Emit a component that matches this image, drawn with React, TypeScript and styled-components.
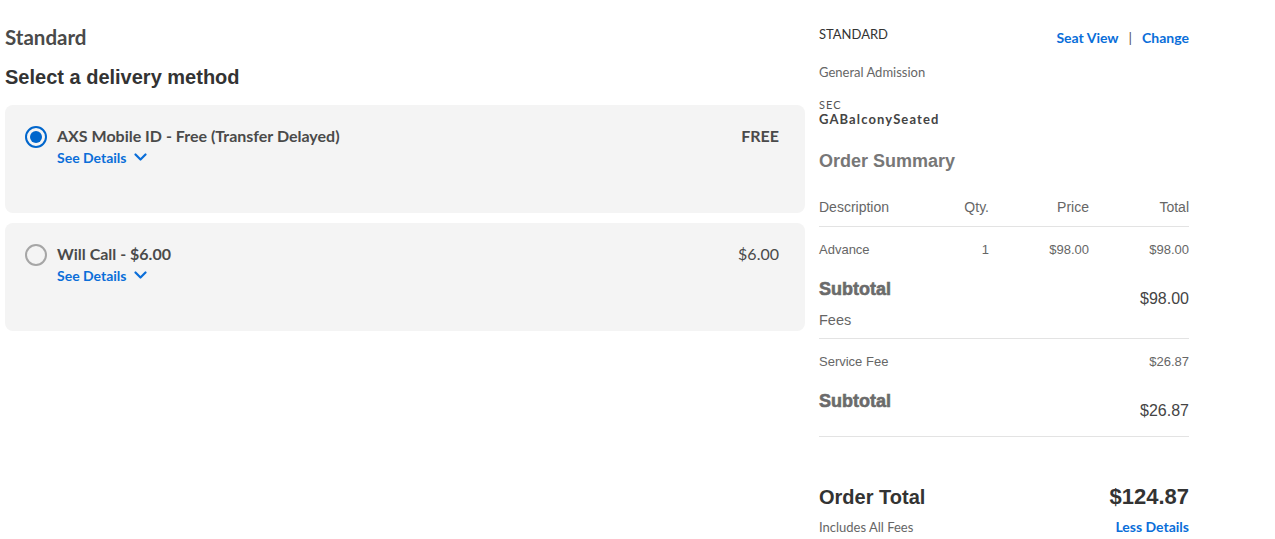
import React from "react";
import styled, { createGlobalStyle } from "styled-components";

const Global = createGlobalStyle`
  html, body { margin: 0; padding: 0; background: #fff; }
  body { font-family: Lato, "Liberation Sans", sans-serif; }
  * { box-sizing: border-box; }
`;

const Page = styled.div`
  display: flex;
  align-items: flex-start;
  gap: 14px;
  padding: 0 0 0 5px;
  width: 1275px;
  height: 539px;
  overflow: hidden;
`;

const Left = styled.div`
  width: 800px;
  display: flex;
  flex-direction: column;
  padding-top: 25px;
`;

const TicketType = styled.div`
  font-family: Lato, sans-serif;
  font-weight: 700;
  font-size: 20.5px;
  line-height: 24px;
  color: #4a4a4a;
`;

const SectionTitle = styled.h2`
  margin: 16px 0 16px;
  font-family: "Liberation Sans", Arial, sans-serif;
  font-weight: 700;
  font-size: 20px;
  line-height: 24px;
  color: #333;
`;

const Options = styled.div`
  display: flex;
  flex-direction: column;
  gap: 10px;
`;

const Card = styled.div`
  display: flex;
  align-items: flex-start;
  height: 108px;
  background: #f4f4f4;
  border-radius: 8px;
  padding: 21px 26px 0 20px;
`;

const Radio = styled.span<{ $checked?: boolean }>`
  flex: none;
  width: 22px;
  height: 22px;
  border-radius: 50%;
  border: 2px solid ${(p) => (p.$checked ? "#0066cc" : "#a6a6a6")};
  display: flex;
  align-items: center;
  justify-content: center;
  margin-right: 10px;
  &::after {
    content: "";
    display: ${(p) => (p.$checked ? "block" : "none")};
    width: 12px;
    height: 12px;
    border-radius: 50%;
    background: #0066cc;
  }
`;

const OptionBody = styled.div`
  flex: 1;
  display: flex;
  flex-direction: column;
`;

const OptionTitle = styled.div`
  font-family: Lato, sans-serif;
  font-weight: 700;
  font-size: 16px;
  line-height: 20px;
  color: #4a4a4a;
`;

const DetailsLink = styled.a`
  display: inline-flex;
  align-items: center;
  gap: 8px;
  margin-top: 3px;
  font-family: Lato, sans-serif;
  font-weight: 700;
  font-size: 14px;
  line-height: 17px;
  color: #0a6ed9;
  text-decoration: none;
  cursor: pointer;
`;

const OptionPrice = styled.div<{ $bold?: boolean }>`
  font-family: Lato, sans-serif;
  font-weight: ${(p) => (p.$bold ? 700 : 400)};
  font-size: 16px;
  line-height: 20px;
  color: #4a4a4a;
`;

const Right = styled.aside`
  width: 370px;
  display: flex;
  flex-direction: column;
  padding-top: 26px;
`;

const TopRow = styled.div`
  display: flex;
  justify-content: space-between;
  align-items: flex-start;
`;

const SmallText = styled.div<{ $muted?: boolean }>`
  font-family: Lato, sans-serif;
  font-size: 13px;
  line-height: 16px;
  color: ${(p) => (p.$muted ? "#666" : "#333")};
`;

const Links = styled.div`
  display: flex;
  align-items: center;
  gap: 10px;
  margin-top: 3px;
  font-family: Lato, sans-serif;
  font-weight: 700;
  font-size: 14px;
  line-height: 17px;
`;

const BlueLink = styled.a`
  color: #0a6ed9;
  text-decoration: none;
  cursor: pointer;
`;

const Pipe = styled.span`
  color: #555;
  font-weight: 400;
`;

const Admission = styled(SmallText)`
  margin-top: 18px;
`;

const SecBlock = styled.div`
  margin-top: 19px;
  display: flex;
  flex-direction: column;
`;

const SecLabel = styled.div`
  font-family: Lato, sans-serif;
  font-size: 11px;
  line-height: 12px;
  letter-spacing: 1px;
  color: #555;
`;

const SecValue = styled.div`
  font-family: Lato, sans-serif;
  font-weight: 700;
  font-size: 13px;
  line-height: 16px;
  letter-spacing: 1.1px;
  color: #444;
`;

const SummaryTitle = styled.h3`
  margin: 23px 0 0;
  font-family: "Liberation Sans", Arial, sans-serif;
  font-weight: 700;
  font-size: 18px;
  line-height: 22px;
  color: #777;
`;

const Grid = styled.div<{ $border?: boolean; $pad?: string }>`
  display: grid;
  grid-template-columns: 1fr 70px 100px 100px;
  align-items: center;
  padding: ${(p) => p.$pad || "0"};
  border-bottom: ${(p) => (p.$border ? "1px solid #e3e3e3" : "none")};
  font-family: "Liberation Sans", Arial, sans-serif;
  color: #666;
`;

const Cell = styled.span<{ $right?: boolean; $size?: number }>`
  text-align: ${(p) => (p.$right ? "right" : "left")};
  font-size: ${(p) => p.$size || 13}px;
  line-height: 18px;
`;

const SubBlock = styled.div<{ $pb: number }>`
  display: flex;
  justify-content: space-between;
  align-items: flex-start;
  padding-bottom: ${(p) => p.$pb}px;
  border-bottom: 1px solid #e3e3e3;
`;

const SubLeft = styled.div`
  display: flex;
  flex-direction: column;
`;

const SubLabel = styled.div`
  font-family: "Liberation Sans", Arial, sans-serif;
  font-weight: 700;
  font-size: 18px;
  line-height: 20px;
  color: #6b6b6b;
  -webkit-text-stroke: 0.6px #6b6b6b;
`;

const FeesLabel = styled.div`
  margin-top: 12px;
  font-family: "Liberation Sans", Arial, sans-serif;
  font-size: 14.5px;
  line-height: 18px;
  color: #666;
`;

const SubValue = styled.div`
  margin-top: 10px;
  font-family: "Liberation Sans", Arial, sans-serif;
  font-size: 16px;
  line-height: 20px;
  color: #444;
`;

const TotalRow = styled.div`
  display: flex;
  justify-content: space-between;
  align-items: baseline;
  margin-top: 48px;
  font-family: "Liberation Sans", Arial, sans-serif;
  font-weight: 700;
  color: #333;
`;

const TotalLabel = styled.span`
  font-size: 20px;
  line-height: 24px;
`;

const TotalValue = styled.span`
  font-size: 22px;
  line-height: 24px;
`;

const FootRow = styled.div`
  display: flex;
  justify-content: space-between;
  align-items: center;
  margin-top: 9px;
`;

const LessLink = styled(BlueLink)`
  font-family: Lato, sans-serif;
  font-weight: 700;
  font-size: 14px;
  line-height: 17px;
`;

const Chevron = () => (
  <svg width="13" height="9" viewBox="0 0 13 9" fill="none">
    <path d="M1.5 1.5 L6.5 6.5 L11.5 1.5" stroke="#0a6ed9" strokeWidth="2.2" strokeLinecap="round" strokeLinejoin="round" />
  </svg>
);

const options = [
  { title: "AXS Mobile ID - Free (Transfer Delayed)", price: "FREE", bold: true, checked: true },
  { title: "Will Call - $6.00", price: "$6.00", bold: false, checked: false },
];

export default function App() {
  return (
    <>
      <Global />
      <Page>
        <Left>
          <TicketType>Standard</TicketType>
          <SectionTitle>Select a delivery method</SectionTitle>
          <Options>
            {options.map((o) => (
              <Card key={o.title}>
                <Radio $checked={o.checked} />
                <OptionBody>
                  <OptionTitle>{o.title}</OptionTitle>
                  <div>
                    <DetailsLink>
                      See Details <Chevron />
                    </DetailsLink>
                  </div>
                </OptionBody>
                <OptionPrice $bold={o.bold}>{o.price}</OptionPrice>
              </Card>
            ))}
          </Options>
        </Left>
        <Right>
          <TopRow>
            <SmallText>STANDARD</SmallText>
            <Links>
              <BlueLink>Seat View</BlueLink>
              <Pipe>|</Pipe>
              <BlueLink>Change</BlueLink>
            </Links>
          </TopRow>
          <Admission $muted>General Admission</Admission>
          <SecBlock>
            <SecLabel>SEC</SecLabel>
            <SecValue>GABalconySeated</SecValue>
          </SecBlock>
          <SummaryTitle>Order Summary</SummaryTitle>
          <Grid $border $pad="26px 0 10px">
            <Cell $size={14}>Description</Cell>
            <Cell $right $size={14}>Qty.</Cell>
            <Cell $right $size={14}>Price</Cell>
            <Cell $right $size={14}>Total</Cell>
          </Grid>
          <Grid $pad="14px 0 20px">
            <Cell>Advance</Cell>
            <Cell $right>1</Cell>
            <Cell $right>$98.00</Cell>
            <Cell $right>$98.00</Cell>
          </Grid>
          <SubBlock $pb={9}>
            <SubLeft>
              <SubLabel>Subtotal</SubLabel>
              <FeesLabel>Fees</FeesLabel>
            </SubLeft>
            <SubValue>$98.00</SubValue>
          </SubBlock>
          <Grid $pad="14px 0 20px">
            <Cell>Service Fee</Cell>
            <Cell />
            <Cell />
            <Cell $right>$26.87</Cell>
          </Grid>
          <SubBlock $pb={15}>
            <SubLeft>
              <SubLabel>Subtotal</SubLabel>
            </SubLeft>
            <SubValue>$26.87</SubValue>
          </SubBlock>
          <TotalRow>
            <TotalLabel>Order Total</TotalLabel>
            <TotalValue>$124.87</TotalValue>
          </TotalRow>
          <FootRow>
            <SmallText $muted>Includes All Fees</SmallText>
            <LessLink>Less Details</LessLink>
          </FootRow>
        </Right>
      </Page>
    </>
  );
}
